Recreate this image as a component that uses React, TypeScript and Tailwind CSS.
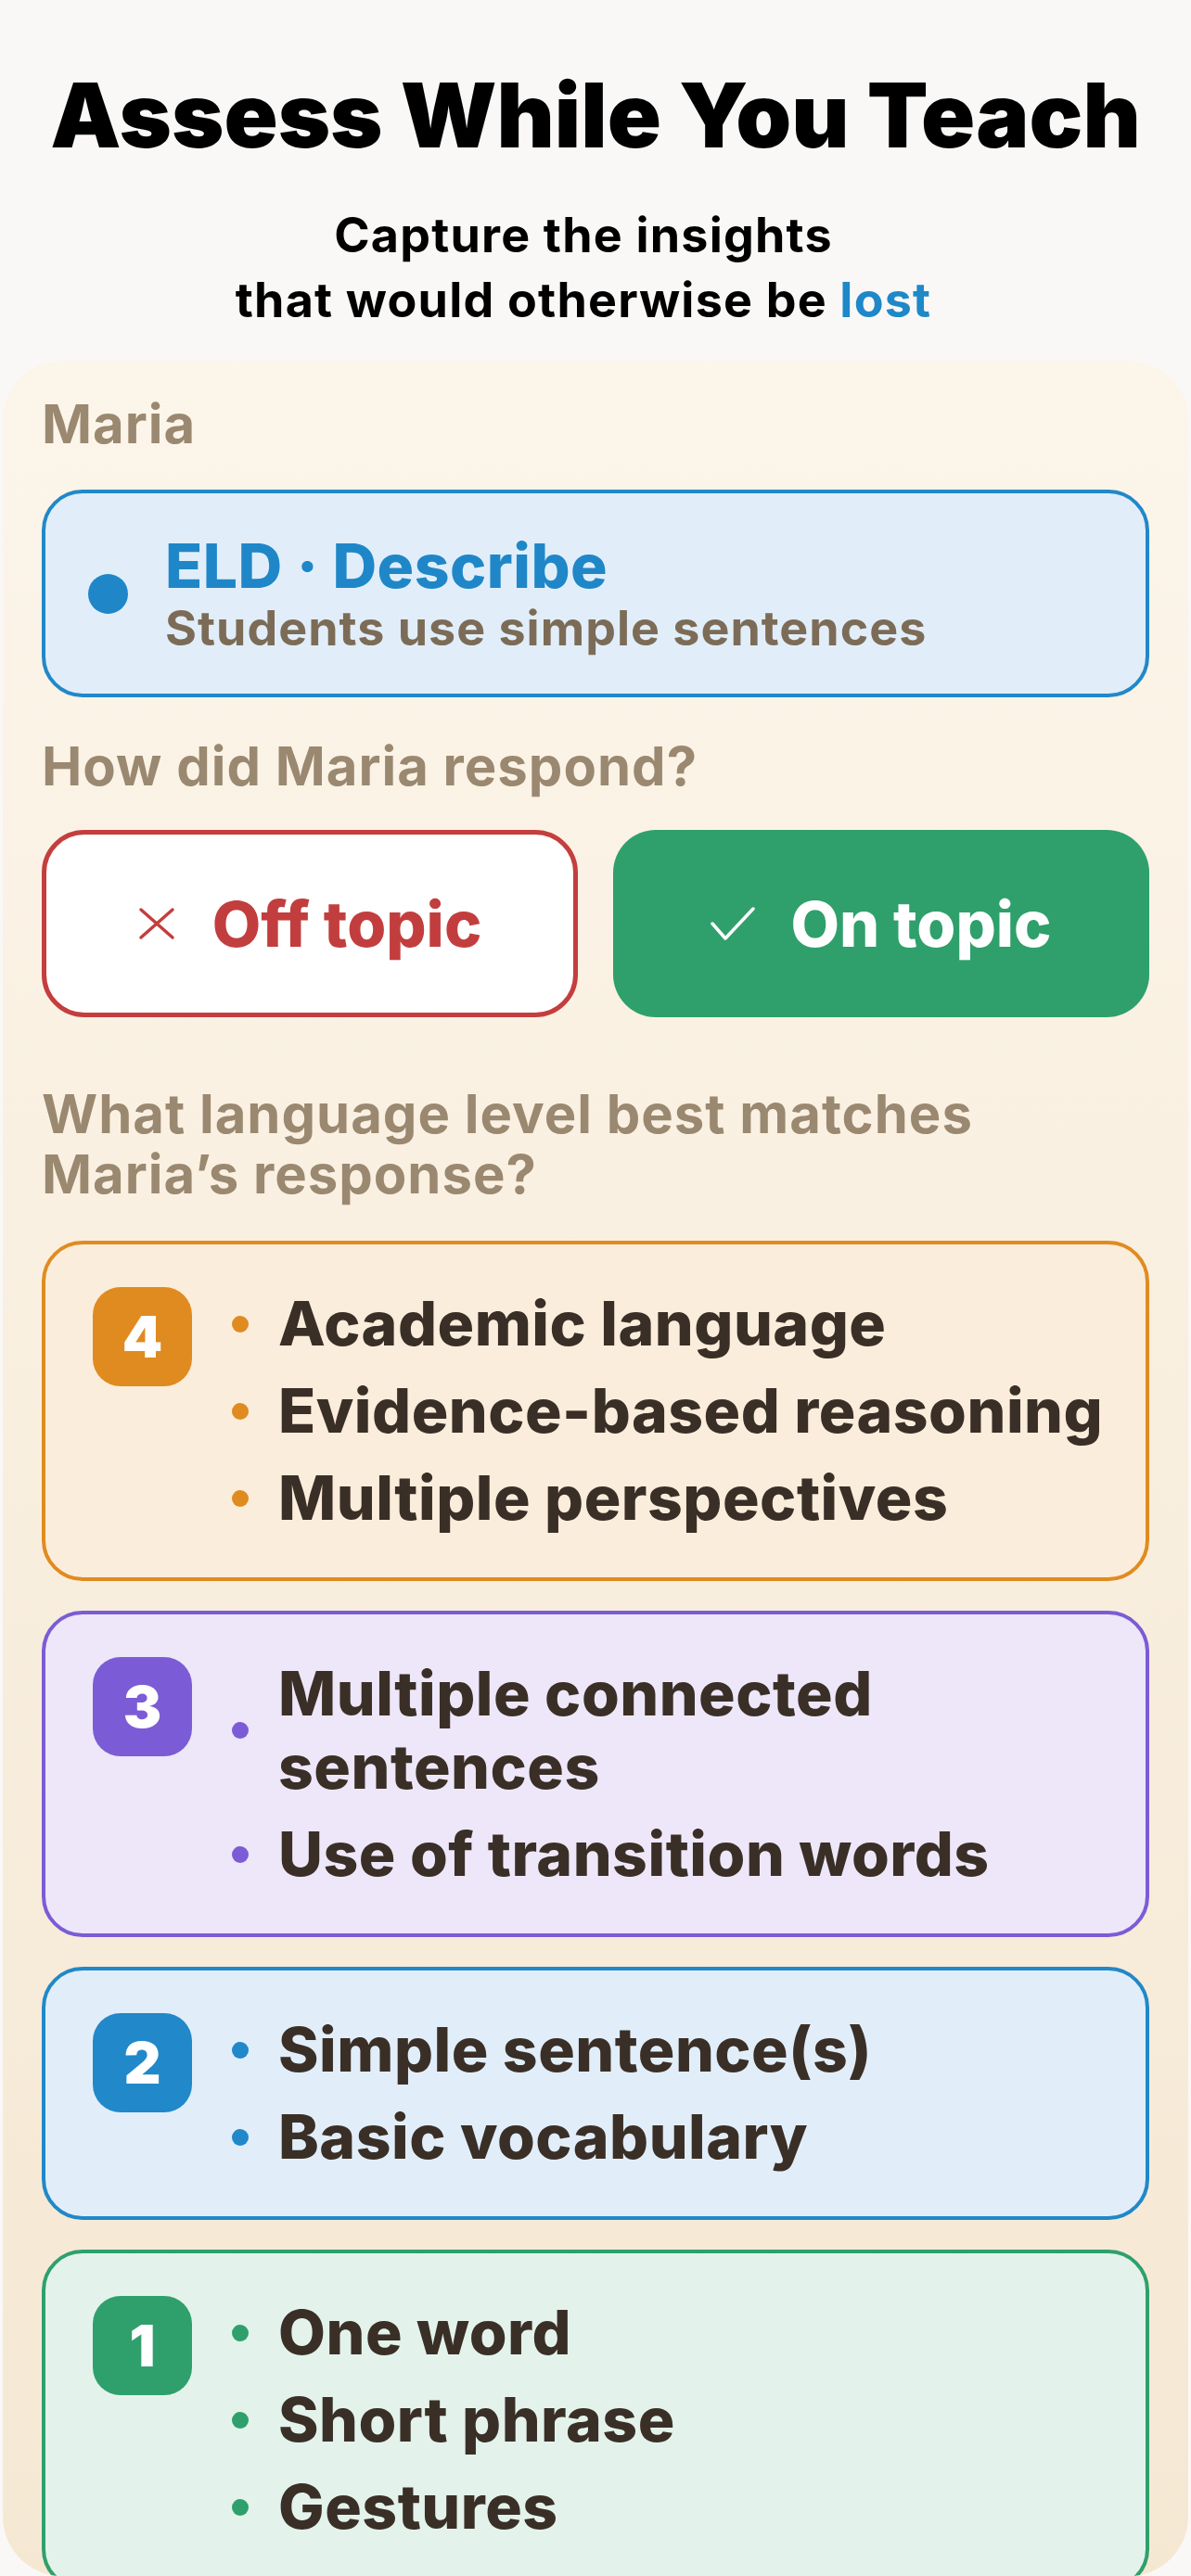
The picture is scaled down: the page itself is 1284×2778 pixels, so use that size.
import React from "react";

const levels = [
  {
    n: 4,
    card: "border-[#e08b20] bg-[#fbeddb]",
    accent: "bg-[#e08b20]",
    items: ["Academic language", "Evidence-based reasoning", "Multiple perspectives"],
  },
  {
    n: 3,
    card: "border-[#7b5cd6] bg-[#ede7f9]",
    accent: "bg-[#7b5cd6]",
    items: ["Multiple connected sentences", "Use of transition words"],
  },
  {
    n: 2,
    card: "border-[#2188c9] bg-[#e1eefa]",
    accent: "bg-[#2188c9]",
    items: ["Simple sentence(s)", "Basic vocabulary"],
  },
  {
    n: 1,
    card: "border-[#2fa06c] bg-[#e3f3eb]",
    accent: "bg-[#2fa06c]",
    items: ["One word", "Short phrase", "Gestures"],
  },
];

function LevelCard({ level }: { level: (typeof levels)[number] }) {
  return (
    <div className={`flex items-start gap-[43px] rounded-[44px] border-[4px] py-[46px] pl-[51px] pr-[20px] ${level.card}`}>
      <div
        className={`flex h-[107px] w-[107px] shrink-0 items-center justify-center rounded-[30px] text-[62px] font-black text-white ${level.accent}`}
      >
        {level.n}
      </div>
      <ul className="flex flex-col gap-[15px]">
        {level.items.map((item) => (
          <li key={item} className="flex items-center gap-[32px]">
            <span className={`h-[18px] w-[18px] shrink-0 rounded-full ${level.accent}`} />
            <span className="text-[66px] font-extrabold leading-[79px] tracking-[0.5px] text-[#3a2f27]">
              {item}
            </span>
          </li>
        ))}
      </ul>
    </div>
  );
}

export default function App() {
  return (
    <div
      className="flex h-[2778px] flex-col overflow-hidden bg-[#f9f8f6]"
      style={{ fontFamily: "Inter, 'Noto Sans', sans-serif" }}
    >
      {/* header */}
      <header className="pt-[68px] text-center text-black">
        <h1 className="text-[96px] font-black leading-[113px]">Assess While You Teach</h1>
        <p className="mt-[38px] pr-[26px] text-[52px] font-bold leading-[70px] tracking-[1.2px]">
          Capture the insights
          <br />
          that would otherwise be <span className="text-[#1e88c8]">lost</span>
        </p>
      </header>

      {/* assessment card */}
      <main className="mx-[3px] mt-[30px] min-h-0 flex-1 overflow-hidden rounded-[64px] bg-gradient-to-b from-[#fcf5ea] to-[#f5e8d3] px-[42px] pt-[36px]">
        <p className="text-[58px] font-bold leading-[65px] tracking-[1px] text-[#9a8870]">Maria</p>

        <div className="mt-[38px] flex h-[224px] items-center gap-[40px] rounded-[44px] border-[4px] border-[#2188c9] bg-[#e1eefa] pl-[46px]">
          <span className="h-[43px] w-[43px] shrink-0 rounded-full bg-[#1f87c8]" />
          <div>
            <p className="text-[66px] font-extrabold leading-[72px] tracking-[0.5px] text-[#1f87c8]">ELD · Describe</p>
            <p className="mt-[4px] text-[52px] font-bold leading-[56px] tracking-[1px] text-[#7c6c57]">
              Students use simple sentences
            </p>
          </div>
        </div>

        <p className="mt-[42px] text-[58px] font-bold leading-[65px] tracking-[1px] text-[#9a8870]">
          How did Maria respond?
        </p>

        <div className="mt-[36px] grid grid-cols-2 gap-[38px]">
          <button className="flex h-[202px] items-center justify-center gap-[40px] rounded-[46px] border-[5px] border-[#c43e3e] bg-white text-[68px] font-extrabold text-[#c23e3e]">
            <svg width="40" height="36" viewBox="0 0 40 36" fill="none" stroke="currentColor" strokeWidth="3.5" strokeLinecap="round">
              <path d="M3 3 L37 33 M37 3 L3 33" />
            </svg>
            <span>Off topic</span>
          </button>
          <button className="flex h-[202px] items-center justify-center gap-[38px] rounded-[46px] bg-[#2fa06c] text-[68px] font-extrabold text-white">
            <svg width="48" height="36" viewBox="0 0 48 36" fill="none" stroke="currentColor" strokeWidth="3.5" strokeLinecap="round" strokeLinejoin="round">
              <path d="M2 18 L16 34 L46 2" />
            </svg>
            <span>On topic</span>
          </button>
        </div>

        <p className="mt-[72px] text-[58px] font-bold leading-[65px] tracking-[1px] text-[#9a8870]">
          What language level best matches
          <br />
          Maria’s response?
        </p>

        <div className="mt-[39px] flex flex-col gap-[32px]">
          {levels.map((level) => (
            <LevelCard key={level.n} level={level} />
          ))}
        </div>
      </main>
    </div>
  );
}
